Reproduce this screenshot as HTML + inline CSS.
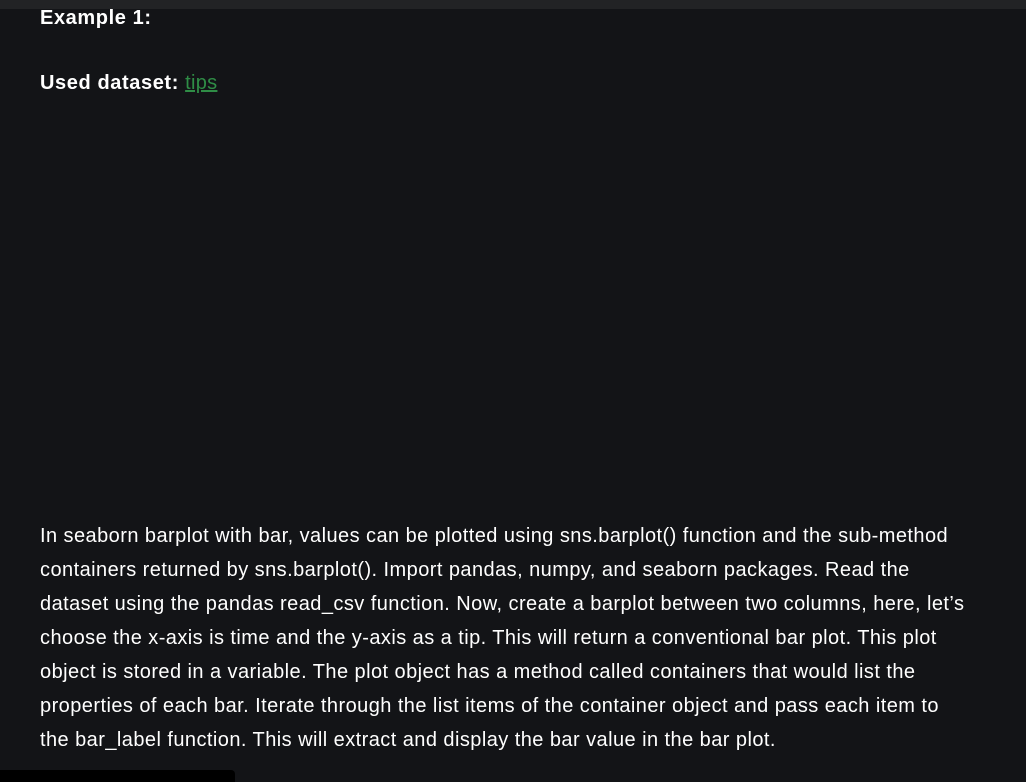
<!DOCTYPE html>
<html><head><style>
html,body{margin:0;padding:0;}
body{width:1026px;height:782px;background:#131417;position:relative;overflow:hidden;font-family:"Liberation Sans",sans-serif;color:#fff;}
.top{position:absolute;left:0;top:0;width:1026px;height:9px;background:#222325;}
.h{position:absolute;left:40px;font-weight:bold;font-size:20px;letter-spacing:0.6px;}
.h a{color:#2f8d46;font-weight:normal;text-decoration:underline;letter-spacing:0.3px;}
.p{position:absolute;left:40px;top:519px;font-size:20px;line-height:34px;letter-spacing:0.44px;}
.p div{white-space:nowrap;}
.blk{position:absolute;left:0;top:770px;width:235px;height:12px;background:#000;border-top-right-radius:4px;}
</style></head><body>
<div class="top"></div>
<div class="h" style="top:7px">Example 1:</div>
<div class="h" style="top:72px">Used dataset: <a>tips</a></div>
<div class="p">
<div>In seaborn barplot with bar, values can be plotted using sns.barplot() function and the sub-method</div>
<div>containers returned by sns.barplot(). Import pandas, numpy, and seaborn packages. Read the</div>
<div>dataset using the pandas read_csv function. Now, create a barplot between two columns, here, let’s</div>
<div>choose the x-axis is time and the y-axis as a tip. This will return a conventional bar plot. This plot</div>
<div>object is stored in a variable. The plot object has a method called containers that would list the</div>
<div>properties of each bar. Iterate through the list items of the container object and pass each item to</div>
<div>the bar_label function. This will extract and display the bar value in the bar plot.</div>
</div>
<div class="blk"></div>
</body></html>
